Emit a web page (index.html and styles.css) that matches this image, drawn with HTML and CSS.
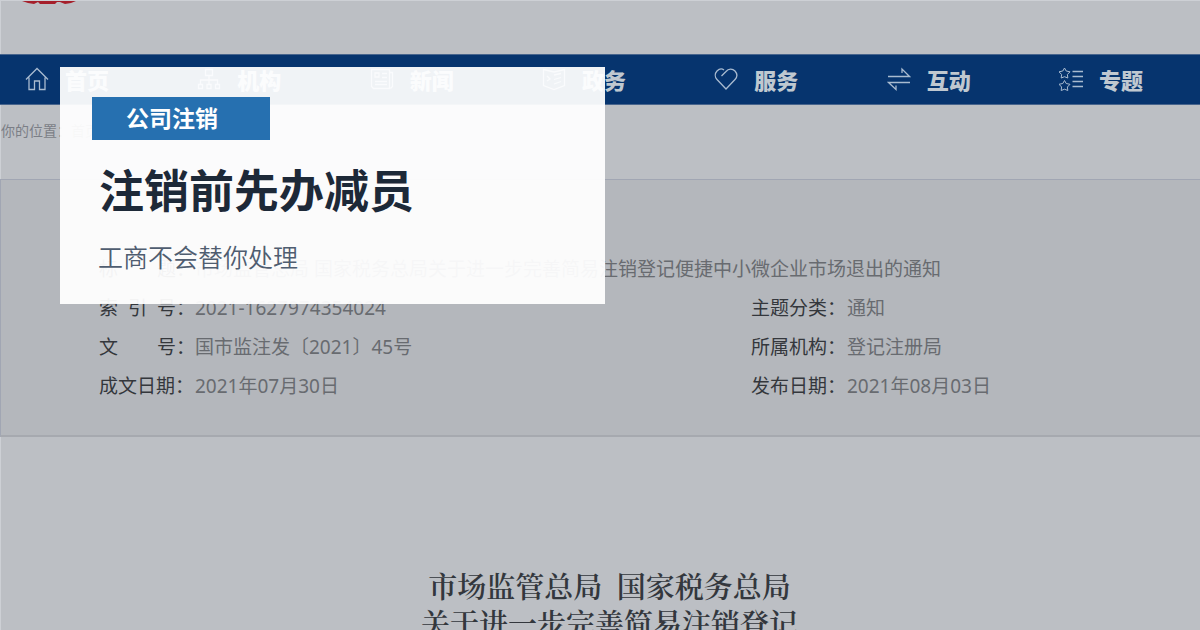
FILE: index.html
```
<!DOCTYPE html>
<html lang="zh-CN">
<head>
  <meta charset="UTF-8" />
  <meta name="viewport" content="width=device-width, initial-scale=1.0" />
  <title>注销前先办减员</title>
  <link rel="stylesheet" href="styles.css">
</head>
<body>
  <div class="page">
    <header class="header">
      <svg class="emblem" viewBox="0 0 54 3" aria-hidden="true">
        <path d="M0 0H54L49 2L43 3L38 1H35L33 3H18L16 1L12 3L6 2Z" fill="#a51f2b"/>
      </svg>
    </header>

    <nav class="nav">
      <a href="#">
        <svg viewBox="0 0 24 24"><path d="M1 12.5L12 1.5L23 12.5M4 10.500V22.500H9.500V14H14.500V22.500H20V10.500"/></svg>
        首页
      </a>
      <a href="#">
        <svg viewBox="0 0 24 24"><path d="M8.500 2.500H15.500V8.500H8.500ZM12 8.500V13M3.500 17V13H20.500V17M12 13V17M1.500 17.500H5.500V21.500H1.500ZM10 17.500H14V21.500H10ZM18.500 17.500H22.500V21.500H18.500Z"/></svg>
        机构
      </a>
      <a href="#">
        <svg viewBox="0 0 24 24"><path d="M1.500 2.500H19.500V21.500H3.500L1.500 19.500ZM19.500 5.500H22.500V19.500L20.500 21.500M5 6H9V10H5ZM12 6.500H17M12 10.500H17M5 14.500H17M5 17.500H17"/></svg>
        新闻
      </a>
      <a href="#">
        <svg viewBox="0 0 24 24"><path d="M1.500 2.500L12 5L22.500 2.500V18.500L12 22.500L1.500 18.500ZM12 8L19 6.500M5 9L8 12L5 14M12 12.500L19 10.500M12 17L19 14.500"/></svg>
        政务
      </a>
      <a href="#">
        <svg viewBox="0 0 24 24"><path d="M7.500 9L12 4.500C14.500 1.500 18.500 1.500 21 4C23.500 6.800 23.300 10 21 12.500L12 22L3 12.500C.7 10 .7 6.500 3 4C5 2 8 1.500 10 3"/></svg>
        服务
      </a>
      <a href="#">
        <svg viewBox="0 0 24 24"><path d="M1 9.500H22.500L15 2V6M23 15.500H1.500L9 22.500V18.500"/></svg>
        互动
      </a>
      <a href="#">
        <svg viewBox="0 0 24 24"><path class="thin" d="M5.500 1L7.200 4L11 4.800L8.400 7.500L8.800 11L5.500 9.700L2.200 11L2.600 7.500L0 4.800L3.800 4ZM5.500 13.500L7.200 16.500L11 17.300L8.400 20L8.800 23.500L5.500 22.200L2.200 23.500L2.600 20L0 17.300L3.800 16.500Z"/><path d="M13.500 4.500H24M13.500 9.500H24M13.500 14.500H24M13.500 19.500H24"/></svg>
        专题
      </a>
    </nav>

    <div class="crumbs">你的位置：<a href="#">首页</a></div>

    <dl class="info">
      <div class="row wide"><dt><span>标</span><span>题：</span></dt><dd>市场监管总局 国家税务总局关于进一步完善简易注销登记便捷中小微企业市场退出的通知</dd></div>
      <div class="row"><dt><span>索</span><span>引</span><span>号：</span></dt><dd>2021-1627974354024</dd></div>
      <div class="row"><dt>主题分类：</dt><dd>通知</dd></div>
      <div class="row"><dt><span>文</span><span>号：</span></dt><dd>国市监注发〔2021〕45号</dd></div>
      <div class="row"><dt>所属机构：</dt><dd>登记注册局</dd></div>
      <div class="row"><dt>成文日期：</dt><dd>2021年07月30日</dd></div>
      <div class="row"><dt>发布日期：</dt><dd>2021年08月03日</dd></div>
    </dl>

    <article class="article">
      <h2>市场监管总局&nbsp; 国家税务总局<br>关于进一步完善简易注销登记</h2>
    </article>
  </div>

  <section class="card">
    <span class="tag">公司注销</span>
    <h1>注销前先办减员</h1>
    <p>工商不会替你处理</p>
  </section>
</body>
</html>
```
FILE: styles.css
```
:root {
  --bg: #bcbfc4;
  --panel: #b4b7bc;
  --line: #a1a6b3;
  --edge: #cdd0d5;
  --navy: #06346e;
  --blue: #2670b0;
}
* {
  box-sizing: border-box;
}
body {
  margin: 0;
  position: relative;
  background: var(--bg);
  font-family: "Noto Sans", "Noto Sans CJK SC", sans-serif;
}
.page {
  height: 100vh;
  overflow: hidden;
  border-top: 1px solid var(--edge);
}
.header, .crumbs, .article {
  border-left: 1px solid var(--edge);
}
.header {
  height: 53px;
  padding-left: 21px;
}
.emblem {
  display: block;
  width: 54px;
  height: 3px;
}
.nav {
  display: flex;
  justify-content: space-between;
  align-items: center;
  height: 51px;
  padding: 0 57px 0 25px;
  background: var(--navy);
  border-top: 1px solid #48658d;
  border-bottom: 1px solid #48658d;
}
.nav a {
  display: flex;
  align-items: center;
  gap: 16px;
  padding-bottom: 2px;
  color: #bfc8d0;
  font-family: "Noto Sans CJK SC", sans-serif;
  font-size: 22px;
  font-weight: 900;
  line-height: 30px;
  text-decoration: none;
}
.nav svg {
  width: 24px;
  height: 24px;
  fill: none;
  stroke: #a9bbd0;
  stroke-width: 1.3;
}
.nav .thin {
  stroke-width: 1;
}
.crumbs {
  height: 74px;
  padding-top: 16px;
  color: #7b7e86;
  font-size: 14px;
  line-height: 20px;
}
.crumbs a {
  color: inherit;
  text-decoration: none;
}
.info {
  display: grid;
  grid-template-columns: 652px 1fr;
  margin: 0;
  padding: 70px 0 29px 98px;
  background: var(--panel);
  border-top: 1px solid var(--line);
  border-bottom: 2px solid #a6a9af;
  border-left: 1px solid var(--line);
  font-size: 19px;
  line-height: 39px;
}
.row {
  display: flex;
}
.wide {
  grid-column: 1 / -1;
}
.info dt {
  display: flex;
  justify-content: space-between;
  width: 96px;
  color: #34373c;
}
.info dd {
  margin: 0;
  color: #686b70;
  white-space: nowrap;
}
.article {
  padding: 130px 0 0 18px;
}
.article h2 {
  margin: 0;
  color: #33373d;
  font-family: "Noto Serif CJK SC", "Noto Sans CJK SC", serif;
  font-size: 29px;
  font-weight: 600;
  line-height: 37px;
  text-align: center;
}
/* floats over the page behind it */
.card {
  position: absolute;
  top: 67px;
  left: 60px;
  width: 545px;
  padding: 30px 32px;
  background: rgba(255, 255, 255, 0.94);
}
.tag {
  display: block;
  width: 178px;
  padding-left: 34px;
  background: var(--blue);
  color: #fff;
  font-size: 23px;
  font-weight: 700;
  line-height: 43px;
}
.card h1 {
  margin: 20px 0 0 7px;
  color: #1d2938;
  font-size: 45px;
  font-weight: 700;
  line-height: 62px;
}
.card p {
  margin: 16px 0 0 6px;
  color: #4f5d70;
  font-family: "Noto Sans CJK SC", sans-serif;
  font-size: 25px;
  font-weight: 350;
  line-height: 36px;
}
```
